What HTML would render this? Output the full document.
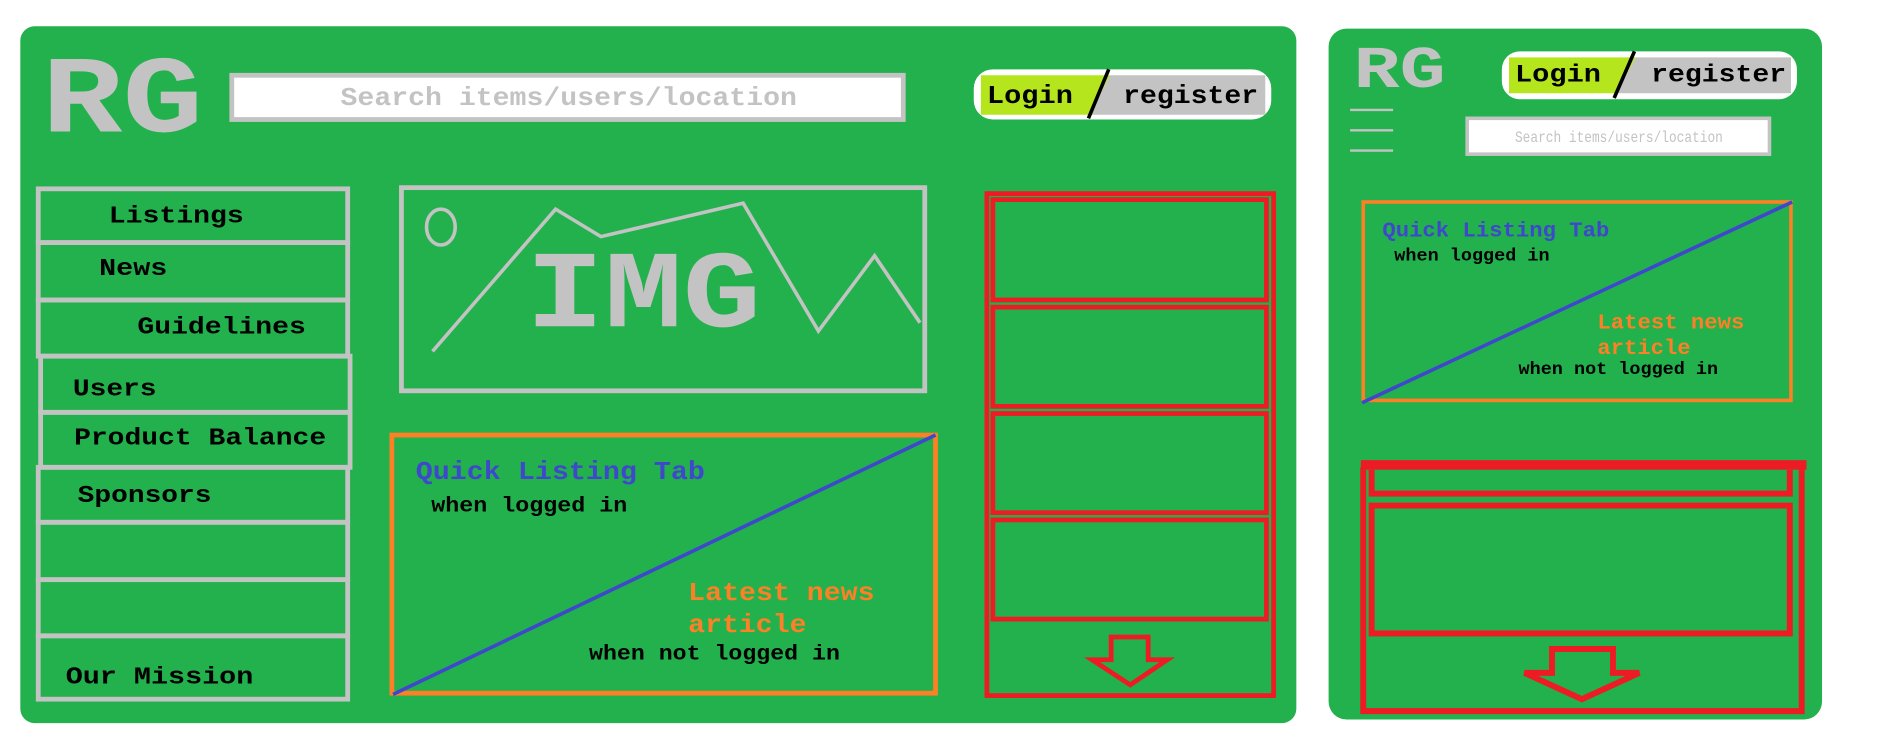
<!DOCTYPE html>
<html><head><meta charset="utf-8"><style>
html,body{margin:0;padding:0;background:#fff;width:1877px;height:741px;overflow:hidden}
svg{display:block}
text{font-family:"Liberation Mono","Courier New",monospace;font-weight:bold}
</style></head><body>
<svg width="1877" height="741" viewBox="0 0 1571 620" preserveAspectRatio="none" xmlns="http://www.w3.org/2000/svg">
<rect x="0" y="0" width="1571" height="620" fill="#fff"/>
<!-- left panel -->
<rect x="17" y="22" width="1068" height="583" rx="12" fill="#22b14c"/>
<text x="35" y="110" font-size="92" fill="#c3c3c3" textLength="135" lengthAdjust="spacingAndGlyphs">RG</text>
<rect x="194" y="63" width="562" height="37" fill="#fff" stroke="#c3c3c3" stroke-width="4"/>
<text x="285" y="88" font-size="22" fill="#c3c3c3" textLength="382" lengthAdjust="spacingAndGlyphs">Search items/users/location</text>
<!-- login pill -->
<rect x="815" y="58" width="249" height="42" rx="16" fill="#fff"/>
<path d="M821 63 H929 L912 96 H821 Z" fill="#b5e61d"/>
<path d="M929 63 H1059 V96 H912 Z" fill="#c3c3c3"/>
<line x1="911" y1="99" x2="928" y2="58" stroke="#000" stroke-width="3"/>
<text x="826" y="86" font-size="22" fill="#000" textLength="72" lengthAdjust="spacingAndGlyphs">Login</text>
<text x="940" y="86" font-size="22" fill="#000" textLength="113" lengthAdjust="spacingAndGlyphs">register</text>
<!-- sidebar -->
<g fill="none" stroke="#c3c3c3" stroke-width="4">
<rect x="32" y="158" width="259" height="45"/>
<rect x="32" y="203" width="259" height="48"/>
<rect x="32" y="251" width="259" height="47"/>
<rect x="34" y="298" width="259" height="47"/>
<rect x="34" y="345" width="259" height="46"/>
<rect x="32" y="391" width="259" height="46"/>
<rect x="32" y="437" width="259" height="48"/>
<rect x="32" y="485" width="259" height="47"/>
<rect x="32" y="532" width="259" height="53"/>
</g>
<g font-size="20" fill="#000">
<text x="91" y="186" textLength="113" lengthAdjust="spacingAndGlyphs">Listings</text>
<text x="83" y="230" textLength="57" lengthAdjust="spacingAndGlyphs">News</text>
<text x="115" y="279" textLength="141" lengthAdjust="spacingAndGlyphs">Guidelines</text>
<text x="61" y="331" textLength="70" lengthAdjust="spacingAndGlyphs">Users</text>
<text x="62" y="372" textLength="211" lengthAdjust="spacingAndGlyphs">Product Balance</text>
<text x="65" y="420" textLength="112" lengthAdjust="spacingAndGlyphs">Sponsors</text>
<text x="55" y="572" textLength="157" lengthAdjust="spacingAndGlyphs">Our Mission</text>
</g>
<!-- IMG box -->
<rect x="336" y="157" width="438" height="170" fill="none" stroke="#c3c3c3" stroke-width="4"/>
<ellipse cx="369" cy="190" rx="12" ry="15" fill="none" stroke="#c3c3c3" stroke-width="3"/>
<polyline points="362,294 465,175 503,198 622,170 685,277 732,214 770,270" fill="none" stroke="#c3c3c3" stroke-width="3"/>
<text x="440" y="273" font-size="92" fill="#c3c3c3" textLength="197" lengthAdjust="spacingAndGlyphs">IMG</text>
<!-- orange box -->
<rect x="328" y="364" width="455" height="216" fill="none" stroke="#ff7f27" stroke-width="4"/>
<line x1="329" y1="581" x2="783" y2="364" stroke="#3f48cc" stroke-width="3"/>
<text x="348" y="401" font-size="22" fill="#3f48cc" textLength="242" lengthAdjust="spacingAndGlyphs">Quick Listing Tab</text>
<text x="361" y="428" font-size="18" fill="#000" textLength="164" lengthAdjust="spacingAndGlyphs">when logged in</text>
<text x="576" y="502" font-size="22" fill="#ff7f27" textLength="156" lengthAdjust="spacingAndGlyphs">Latest news</text>
<text x="576" y="529" font-size="22" fill="#ff7f27" textLength="99" lengthAdjust="spacingAndGlyphs">article</text>
<text x="493" y="552" font-size="18" fill="#000" textLength="210" lengthAdjust="spacingAndGlyphs">when not logged in</text>
<!-- red column -->
<g fill="none" stroke="#ed1c24" stroke-width="4">
<rect x="826" y="162" width="240" height="420"/>
<rect x="831" y="167" width="229" height="84"/>
<rect x="831" y="257" width="229" height="83"/>
<rect x="831" y="346" width="229" height="83"/>
<rect x="831" y="435" width="229" height="83"/>
</g>
<path d="M930 533 H961 V552 H977 L946 573 L914 552 H930 Z" fill="none" stroke="#ed1c24" stroke-width="4" stroke-linejoin="miter"/>
<!-- right panel -->
<rect x="1112" y="24" width="413" height="578" rx="15" fill="#22b14c"/>
<text x="1133" y="73" font-size="50" fill="#c3c3c3" textLength="77" lengthAdjust="spacingAndGlyphs">RG</text>
<rect x="1257" y="43" width="247" height="40" rx="15" fill="#fff"/>
<path d="M1263 48 H1369 L1353 78 H1263 Z" fill="#b5e61d"/>
<path d="M1369 48 H1499 V78 H1353 Z" fill="#c3c3c3"/>
<line x1="1351" y1="82" x2="1368" y2="43" stroke="#000" stroke-width="3"/>
<text x="1268" y="68" font-size="21" fill="#000" textLength="72" lengthAdjust="spacingAndGlyphs">Login</text>
<text x="1382" y="68" font-size="21" fill="#000" textLength="113" lengthAdjust="spacingAndGlyphs">register</text>
<g stroke="#c3c3c3" stroke-width="2"><line x1="1130" y1="92" x2="1166" y2="92"/><line x1="1130" y1="109" x2="1166" y2="109"/><line x1="1130" y1="126" x2="1166" y2="126"/></g>
<rect x="1228" y="99" width="253" height="30" fill="#fff" stroke="#c3c3c3" stroke-width="3"/>
<text x="1268" y="119" font-size="13" fill="#c3c3c3" style="font-weight:normal" textLength="174" lengthAdjust="spacingAndGlyphs">Search items/users/location</text>
<rect x="1141" y="169" width="358" height="166" fill="none" stroke="#ff7f27" stroke-width="3"/>
<line x1="1140" y1="337" x2="1500" y2="169" stroke="#3f48cc" stroke-width="3"/>
<text x="1157" y="198" font-size="18" fill="#3f48cc" textLength="190" lengthAdjust="spacingAndGlyphs">Quick Listing Tab</text>
<text x="1167" y="218" font-size="15" fill="#000" textLength="130" lengthAdjust="spacingAndGlyphs">when logged in</text>
<text x="1337" y="275" font-size="18" fill="#ff7f27" textLength="123" lengthAdjust="spacingAndGlyphs">Latest news</text>
<text x="1337" y="296" font-size="18" fill="#ff7f27" textLength="78" lengthAdjust="spacingAndGlyphs">article</text>
<text x="1271" y="313" font-size="15" fill="#000" textLength="167" lengthAdjust="spacingAndGlyphs">when not logged in</text>
<!-- right red block -->
<rect x="1139" y="385" width="373" height="8" fill="#ed1c24"/>
<g fill="none" stroke="#ed1c24">
<path d="M1141 391 V595 H1508 V391" stroke-width="5"/>
<path d="M1148 393 V413 H1498 V393" stroke-width="5"/>
<rect x="1148" y="423" width="350" height="107" stroke-width="5"/>
</g>
<path d="M1299 543 H1350 V563 H1372 L1324 585 L1276 563 H1299 Z" fill="none" stroke="#ed1c24" stroke-width="5"/>
</svg>
</body></html>
